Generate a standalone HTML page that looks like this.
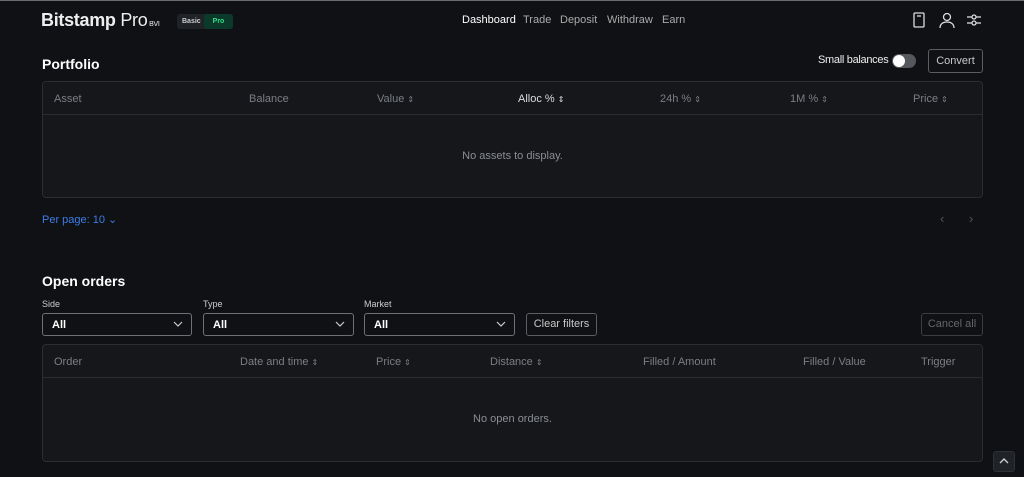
<!DOCTYPE html>
<html><head><style>
*{box-sizing:border-box;margin:0;padding:0}
body{width:1024px;height:477px;background:#0f1114;font-family:"Liberation Sans",sans-serif;color:#e8e8e8;position:relative;overflow:hidden;border-top:1px solid #6a6b6d}
.a{position:absolute;white-space:nowrap}
.g{color:#7b7e84;font-size:11px}
.tbl{position:absolute;left:42px;width:941px;background:#15171a;border:1px solid #2a2d31;border-radius:4px}
.hdr{height:33px;border-bottom:1px solid #2a2d31;position:relative}
.sel{position:absolute;height:23px;border:1px solid #6d7075;border-radius:3px;font-size:11px;font-weight:bold;color:#fff;padding:5px 0 0 9px}
.sel svg{position:absolute;right:8px;top:7px}
.btn{position:absolute;border:1px solid #5a5d62;border-radius:3px;font-size:11px;color:#c8c8c8;text-align:center}
.s{font-size:8px}
</style></head><body>
<div class="a" style="left:41px;top:9px;font-size:18px;font-weight:bold;color:#eee;letter-spacing:-.3px">Bitstamp <span style="font-weight:normal">Pro</span><span style="font-size:7px;font-weight:normal"> BVI</span></div>
<div class="a" style="left:177px;top:13px;width:56px;height:15px;background:#1f2226;border-radius:3px"></div>
<div class="a" style="left:182px;top:13px;font-size:7px;line-height:15px;font-weight:bold;color:#ccc">Basic</div>
<div class="a" style="left:204px;top:13px;width:29px;height:15px;background:#0b3a2a;border-radius:3px;color:#2fdc8a;font-size:7px;font-weight:bold;text-align:center;line-height:15px">Pro</div>
<div class="a" style="left:462px;top:13px;font-size:11px;color:#fff">Dashboard</div>
<div class="a" style="left:523px;top:13px;font-size:11px;color:#aaa">Trade</div>
<div class="a" style="left:560px;top:13px;font-size:11px;color:#aaa">Deposit</div>
<div class="a" style="left:607px;top:13px;font-size:11px;color:#aaa">Withdraw</div>
<div class="a" style="left:662px;top:13px;font-size:11px;color:#aaa">Earn</div>
<svg class="a" style="left:912px;top:11px" width="14" height="16" fill="none" stroke="#ddd" stroke-width="1.3"><rect x="2" y="1" width="10" height="14" rx="1"/><line x1="5" y1="4" x2="9" y2="4"/></svg>
<svg class="a" style="left:938px;top:11px" width="18" height="17" fill="none" stroke="#ddd" stroke-width="1.3"><circle cx="9" cy="5" r="3.5"/><path d="M2 16c0-4 3-6 7-6s7 2 7 6"/></svg>
<svg class="a" style="left:966px;top:12px" width="16" height="14" fill="none" stroke="#ddd" stroke-width="1.3"><line x1="1" y1="4" x2="15" y2="4"/><line x1="1" y1="10" x2="15" y2="10"/><circle cx="8" cy="4" r="2" fill="#0f1114"/><circle cx="8" cy="10" r="2" fill="#0f1114"/></svg>
<div class="a" style="left:42px;top:55px;font-size:14px;font-weight:bold;color:#fff">Portfolio</div>
<div class="a" style="left:818px;top:53px;font-size:11px;color:#eee;letter-spacing:-.3px">Small balances</div>
<div class="a" style="left:892px;top:53px;width:24px;height:14px;border-radius:7px;background:#55585c"></div>
<div class="a" style="left:893px;top:54px;width:12px;height:12px;border-radius:6px;background:#fff"></div>
<div class="btn" style="left:928px;top:48px;width:55px;height:24px;line-height:22px">Convert</div>
<div class="tbl" style="top:80px;height:117px"><div class="hdr">
<span class="a g" style="left:11px;top:11px">Asset</span>
<span class="a g" style="left:206px;top:11px">Balance</span>
<span class="a g" style="left:334px;top:11px">Value <span class="s">⇕</span></span>
<span class="a" style="left:475px;top:11px;font-size:11px;color:#ddd">Alloc % <span class="s">⇕</span></span>
<span class="a g" style="left:617px;top:11px">24h % <span class="s">⇕</span></span>
<span class="a g" style="left:747px;top:11px">1M % <span class="s">⇕</span></span>
<span class="a g" style="left:870px;top:11px">Price <span class="s">⇕</span></span>
</div><div class="a g" style="left:0;width:939px;text-align:center;top:68px;color:#8a8d92">No assets to display.</div></div>
<div class="a" style="left:42px;top:212px;font-size:11px;color:#3c7ee8">Per page: 10 ⌄</div>
<div class="a" style="left:940px;top:210px;color:#555;font-size:13px">‹</div>
<div class="a" style="left:969px;top:210px;color:#555;font-size:13px">›</div>
<div class="a" style="left:42px;top:272px;font-size:14px;font-weight:bold;color:#fff">Open orders</div>
<div class="a" style="left:42px;top:298px;font-size:9px;color:#ccc">Side</div>
<div class="a" style="left:203px;top:298px;font-size:9px;color:#ccc">Type</div>
<div class="a" style="left:364px;top:298px;font-size:9px;color:#ccc">Market</div>
<div class="sel" style="left:42px;top:312px;width:150px">All<svg width="10" height="6" fill="none" stroke="#ccc" stroke-width="1.2"><path d="M1 1l4 4 4-4"/></svg></div>
<div class="sel" style="left:203px;top:312px;width:151px">All<svg width="10" height="6" fill="none" stroke="#ccc" stroke-width="1.2"><path d="M1 1l4 4 4-4"/></svg></div>
<div class="sel" style="left:364px;top:312px;width:151px">All<svg width="10" height="6" fill="none" stroke="#ccc" stroke-width="1.2"><path d="M1 1l4 4 4-4"/></svg></div>
<div class="btn" style="left:526px;top:312px;width:71px;height:23px;line-height:21px">Clear filters</div>
<div class="btn" style="left:921px;top:312px;width:62px;height:23px;line-height:21px;color:#666;border-color:#3a3d41">Cancel all</div>
<div class="tbl" style="top:343px;height:118px"><div class="hdr">
<span class="a g" style="left:11px;top:11px">Order</span>
<span class="a g" style="left:197px;top:11px">Date and time <span class="s">⇕</span></span>
<span class="a g" style="left:333px;top:11px">Price <span class="s">⇕</span></span>
<span class="a g" style="left:447px;top:11px">Distance <span class="s">⇕</span></span>
<span class="a g" style="left:600px;top:11px">Filled / Amount</span>
<span class="a g" style="left:760px;top:11px">Filled / Value</span>
<span class="a g" style="left:878px;top:11px">Trigger</span>
</div><div class="a g" style="left:0;width:939px;text-align:center;top:68px;color:#8a8d92">No open orders.</div></div>
<div class="a" style="left:993px;top:450px;width:22px;height:21px;background:#1f2226;border:1px solid #2e3135;border-radius:3px"></div>
<svg class="a" style="left:999px;top:457px" width="10" height="6" fill="none" stroke="#ccc" stroke-width="1.4"><path d="M1 5l4-4 4 4"/></svg>
</body></html>
